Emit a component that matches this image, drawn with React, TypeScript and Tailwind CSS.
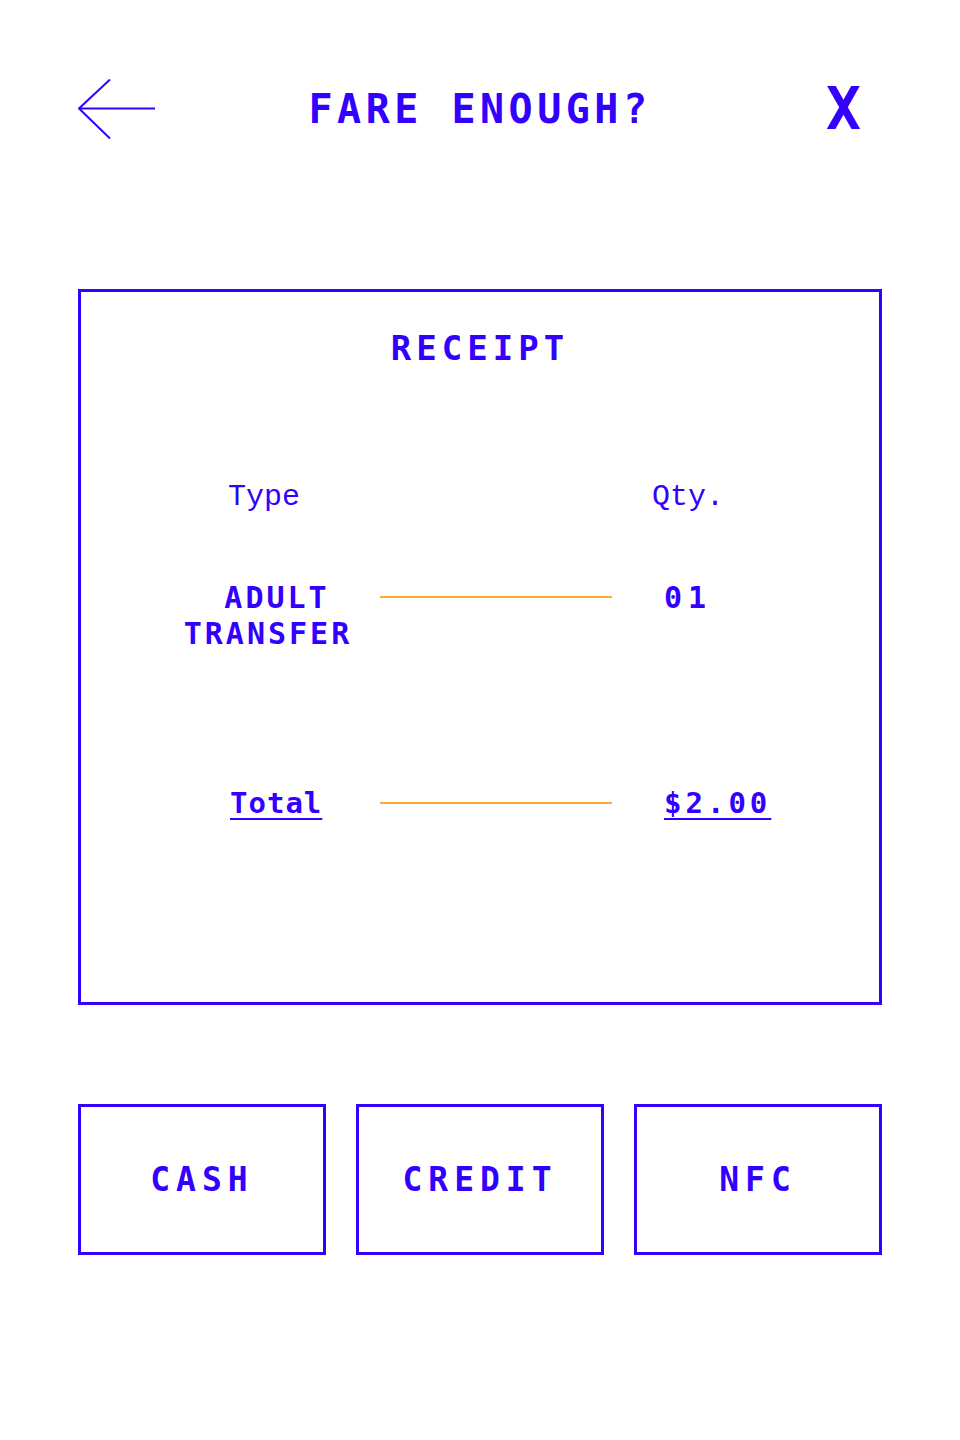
import React from "react";

export default function App() {
  return (
    <div className="w-[960px] h-[1440px] bg-white px-[78px] pt-[79px] text-[#3300ff] [font-family:'DejaVu_Sans_Mono',monospace]">
      {/* Header */}
      <div className="h-[60px] flex items-center">
        <div className="w-[78px] h-[60px] flex items-center">
          <svg width="78" height="60" viewBox="0 0 78 60" fill="none" stroke="#3300ff" strokeWidth="2">
            <path d="M1 29.5 H77" />
            <path d="M32 0.5 L1 29.5 L32 59.5" />
          </svg>
        </div>
        <div className="flex-1 text-center text-[40px] leading-[48px] font-bold tracking-[4.5px]">
          FARE ENOUGH?
        </div>
        <div className="w-[78px] flex justify-end pr-[21px]">
          <span className="text-[58px] leading-[60px] font-bold">X</span>
        </div>
      </div>

      {/* Receipt */}
      <div className="mt-[150px] h-[716px] border-[3px] border-[#3300ff]">
        <div className="mt-[36px] text-center text-[34px] leading-[40px] font-bold tracking-[5px]">RECEIPT</div>

        <div className="mt-[111px] pl-[79px] grid grid-cols-[220px_232px_1fr] text-[30px] leading-[36px] [font-family:'Liberation_Mono',monospace]">
          <div className="text-center pr-[12px]">Type</div>
          <div />
          <div className="pl-[40px]">Qty.</div>
        </div>

        <div className="mt-[65px] pl-[79px] grid grid-cols-[220px_232px_1fr] items-start text-[30px] leading-[36px] font-bold">
          <div className="text-center tracking-[3px] pr-[4px]">
            <div className="pl-[18px]">ADULT</div>
            <div>TRANSFER</div>
          </div>
          <div className="mt-[16px] h-[2px] bg-[#ffa726]" />
          <div className="pl-[52px] tracking-[6px]">01</div>
        </div>

        <div className="mt-[133px] pl-[79px] grid grid-cols-[220px_232px_1fr] items-start text-[29px] leading-[36px] font-bold">
          <div className="pl-[70px]">
            <span className="underline decoration-2 underline-offset-[5px] tracking-[1px]">Total</span>
          </div>
          <div className="mt-[17px] h-[2px] bg-[#ffa726]" />
          <div className="pl-[52px]">
            <span className="underline decoration-2 underline-offset-[5px] tracking-[4px]">$2.00</span>
          </div>
        </div>
      </div>

      {/* Buttons */}
      <div className="mt-[99px] grid grid-cols-3 gap-[30px]">
        {["CASH", "CREDIT", "NFC"].map((t) => (
          <div
            key={t}
            className="h-[151px] border-[3px] border-[#3300ff] flex items-center justify-center text-[33px] leading-[40px] font-bold tracking-[6px]"
          >
            {t}
          </div>
        ))}
      </div>
    </div>
  );
}
